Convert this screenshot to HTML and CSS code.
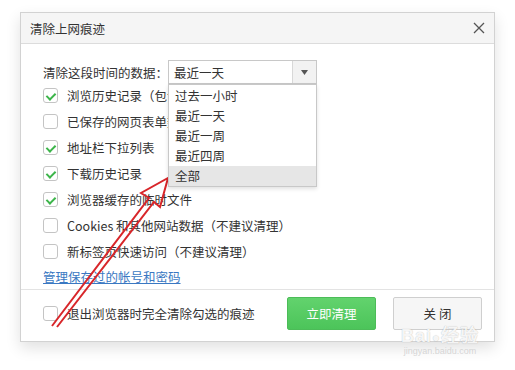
FILE: index.html
```html
<!DOCTYPE html>
<html lang="zh-CN">
<head>
<meta charset="utf-8">
<link rel="stylesheet" href="styles.css">
</head>
<body>
<div class="dialog">
  <div class="titlebar">
    <span class="title">清除上网痕迹</span>
    <svg class="close" width="12" height="12" viewBox="0 0 12 12"><path d="M1 1L11 11M11 1L1 11" stroke="#555" stroke-width="1.3" fill="none"/></svg>
  </div>
  <div class="content">
    <div class="range-row">
      <span class="range-label">清除这段时间的数据：</span>
      <div class="select">
        <span class="select-value">最近一天</span>
        <span class="select-arrow"><svg width="7" height="5" viewBox="0 0 7 5"><path d="M0 0H7L3.5 5Z" fill="#555"/></svg></span>
        <ul class="dropdown">
          <li>过去一小时</li>
          <li>最近一天</li>
          <li>最近一周</li>
          <li>最近四周</li>
          <li class="active">全部</li>
        </ul>
      </div>
    </div>
    <div class="opt"><span class="cb on"></span><span class="clip">浏览历史记录（包含缓存的历史记录）</span></div>
    <div class="opt"><span class="cb"></span><span class="clip">已保存的网页表单数据</span></div>
    <div class="opt"><span class="cb on"></span>地址栏下拉列表</div>
    <div class="opt"><span class="cb on"></span>下载历史记录</div>
    <div class="opt"><span class="cb on"></span>浏览器缓存的临时文件</div>
    <div class="opt"><span class="cb"></span>Cookies 和其他网站数据（不建议清理）</div>
    <div class="opt"><span class="cb"></span>新标签页快速访问（不建议清理）</div>
    <a class="link" href="#">管理保存过的帐号和密码</a>
  </div>
  <div class="footer">
    <div class="opt foot-opt"><span class="cb"></span>退出浏览器时完全清除勾选的痕迹</div>
    <div class="buttons">
      <button class="btn primary">立即清理</button>
      <button class="btn">关 闭</button>
    </div>
  </div>
</div>
<div class="watermark">
  <div class="wm-big">Bai<span class="paw">●</span>经验</div>
  <div class="wm-small">jingyan.baidu.com</div>
</div>
<svg class="arrow" width="515" height="370" viewBox="0 0 515 370">
  <path d="M52 326 L149 198 L141 193 L168 178 L160 207 L154 202 L57 327" fill="none" stroke="#d8262a" stroke-width="2" stroke-linejoin="miter"/>
</svg>
</body>
</html>
```
FILE: styles.css
```css
* { box-sizing: border-box; }
html, body { margin: 0; padding: 0; }
body {
  width: 515px;
  height: 370px;
  background: #fff;
  font-family: "Noto Sans CJK SC", "Noto Sans", sans-serif;
  font-size: 12.5px;
  color: #333;
  position: relative;
  overflow: hidden;
  padding: 12px 0 0 20px;
}
.dialog {
  width: 475px;
  height: 330px;
  border: 1px solid #d2d2d2;
  background: #fff;
  box-shadow: 0 6px 14px rgba(0,0,0,0.12);
  display: flex;
  flex-direction: column;
}
.titlebar {
  height: 31px;
  background: #f5f5f5;
  border-bottom: 1px solid #dcdcdc;
  display: flex;
  align-items: center;
  justify-content: space-between;
  padding: 0 9px 0 9px;
}
.title { font-size: 12.5px; color: #333; }
.close { display: block; }
.content {
  padding: 16px 0 0 22px;
  flex: 1;
  border-bottom: 1px solid #e3e3e3;
}
.range-row {
  display: flex;
  align-items: center;
  height: 24px;
}
.range-label { width: 125px; flex: none; white-space: nowrap; }
.select {
  position: relative;
  width: 149px;
  height: 24px;
  border: 1px solid #c8c8c8;
  display: flex;
  align-items: center;
}
.select-value { flex: 1; padding-left: 5px; }
.select-arrow {
  width: 24px;
  height: 100%;
  border-left: 1px solid #d8d8d8;
  background: #f2f2f2;
  display: flex;
  align-items: center;
  justify-content: center;
}
.dropdown {
  position: absolute;
  left: -1px;
  top: 23px;
  width: 149px;
  margin: 0;
  padding: 1px 0 0;
  list-style: none;
  background: #fff;
  border: 1px solid #c8c8c8;
  box-shadow: 0 2px 4px rgba(0,0,0,0.12);
  z-index: 2;
}
.dropdown li {
  height: 20px;
  line-height: 20px;
  padding-left: 6px;
}
.dropdown li.active { background: #e6e6e6; }
.opt {
  display: flex;
  align-items: center;
  height: 26px;
  white-space: nowrap;
}
.clip {
  max-width: 101px;
  overflow: hidden;
  white-space: nowrap;
}
.range-row + .opt { margin-top: -2px; }
.cb {
  width: 15px;
  height: 15px;
  border: 1px solid #c4c4c4;
  border-radius: 3px;
  margin-right: 9px;
  position: relative;
  background: #fff;
  flex: none;
}
.cb.on::after {
  content: "";
  position: absolute;
  left: 4px;
  top: 2px;
  width: 4px;
  height: 7px;
  border: solid #3cb54a;
  border-width: 0 2px 2px 0;
  transform: rotate(45deg);
}
.link {
  display: inline-block;
  margin-top: 3px;
  color: #3a78c2;
  text-decoration: underline;
  line-height: 20px;
}
.footer {
  height: 51px;
  display: flex;
  align-items: center;
  justify-content: space-between;
  padding: 0 12px 4px 22px;
}
.buttons { display: flex; gap: 17px; }
.btn {
  width: 89px;
  height: 33px;
  border: 1px solid #cfcfcf;
  border-radius: 2px;
  background: #f6f6f6;
  font-family: inherit;
  font-size: 12.5px;
  color: #333;
}
.btn.primary {
  background: linear-gradient(#62d36d, #4cc45a);
  border-color: #4cbc58;
  color: #fff;
}
.watermark {
  position: absolute;
  left: 396px;
  top: 327px;
  width: 88px;
  color: rgba(255,255,255,0.9);
  text-shadow: 0 0 1px rgba(0,0,0,0.3);
  font-family: "Liberation Sans", sans-serif;
  text-align: center;
  line-height: 1;
}
.wm-big { font-size: 18px; font-weight: bold; letter-spacing: 1px; }
.paw { font-size: 13px; }
.wm-small { font-size: 9px; margin-top: 2px; color: rgba(190,190,190,0.6); text-shadow: none; }
.arrow { position: absolute; left: 0; top: 0; pointer-events: none; }
```
